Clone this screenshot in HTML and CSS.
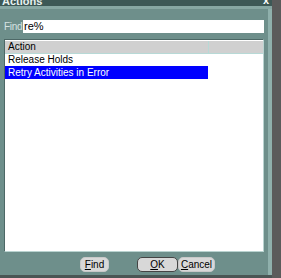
FILE: index.html
```html
<!DOCTYPE html>
<html>
<head>
    <title>Actions</title>
    <link rel="stylesheet" href="styles.css">
</head>
<body>
    <div class="dialog">
        <div class="titlebar">
            <span class="title">Actions</span>
            <span class="close">x</span>
        </div>
        <div class="content">
            <div class="find-row">
                <label class="find-label">Find</label>
                <div class="find-input">re%</div>
            </div>
            <div class="list">
                <div class="list-head">
                    <div class="col-main">Action</div>
                    <div class="col-extra"></div>
                </div>
                <div class="row">Release Holds</div>
                <div class="row selected">Retry Activities in Error</div>
            </div>
            <div class="buttons">
                <button class="btn btn-find"><u>F</u>ind</button>
                <button class="btn btn-ok"><u>O</u>K</button>
                <button class="btn btn-cancel"><u>C</u>ancel</button>
            </div>
        </div>
    </div>
</body>
</html>
```

FILE: styles.css
```css
body {
    margin: 0;
    width: 281px;
    height: 278px;
    overflow: hidden;
    background-color: #5b5b5b;
    font-family: "Liberation Sans", Arial, sans-serif;
    font-size: 10px;
}

.dialog {
    width: 272px;
    height: 275px;
    background-color: #6e8f8b;
    border-bottom: 3px solid #4a5554;
    display: flex;
    flex-direction: column;
}

.titlebar {
    height: 6px;
    background-color: #3d5856;
    border-bottom: 3px solid #87a7a3;
    display: flex;
    justify-content: space-between;
    overflow: hidden;
    font-size: 11px;
}

.title {
    color: #e8f0ef;
    font-weight: bold;
    line-height: 1;
    margin-top: -4px;
    padding-left: 2px;
}

.close {
    color: #ffffff;
    font-weight: bold;
    line-height: 1;
    margin-top: -5px;
    padding-right: 3px;
}

.content {
    flex: 1;
    display: flex;
    flex-direction: column;
    padding: 11px 4px 0 4px;
    border-right: 4px solid #8fb0ac;
}

.find-row {
    display: flex;
    align-items: center;
    height: 13px;
}

.find-label {
    color: #d6e3e2;
    width: 19px;
    flex-shrink: 0;
    letter-spacing: -0.3px;
}

.find-input {
    flex: 1;
    height: 13px;
    line-height: 13px;
    font-size: 11px;
    background-color: #ffffff;
    color: #000;
    padding-left: 1px;
}

.list {
    margin-top: 6px;
    height: 211px;
    background-color: #ffffff;
    border-top: 1px solid #4d6866;
    border-left: 1px solid #4d6866;
    border-right: 1px solid #b9d3d0;
    border-bottom: 1px solid #b9d3d0;
}

.list-head {
    display: flex;
    height: 12px;
    margin-top: 1px;
    background-color: #d0d0d0;
    border-bottom: 1px solid #b7d9d6;
}

.col-main {
    width: 200px;
    padding-left: 3px;
    line-height: 12px;
    border-right: 1px solid #b7d9d6;
}

.col-extra {
    flex: 1;
}

.row {
    width: 200px;
    height: 12px;
    line-height: 12px;
    padding-left: 3px;
    color: #000;
}

.row.selected {
    height: 13px;
    line-height: 13px;
    background-color: #0000ff;
    color: #ffffff;
}

.buttons {
    display: flex;
    padding-left: 76px;
    margin-top: 5px;
}

.btn {
    font-family: "Liberation Sans", Arial, sans-serif;
    font-size: 10px;
    height: 15px;
    padding: 0;
    line-height: 13px;
    background-color: #d8d8d8;
    color: #000;
    border: 1px solid #c8c8c8;
    border-radius: 5px;
}

.btn-find {
    width: 29px;
}

.btn-ok {
    width: 41px;
    margin-left: 28px;
    border: 1px solid #444;
}

.btn-cancel {
    width: 37px;
    margin-left: 0;
}
```
